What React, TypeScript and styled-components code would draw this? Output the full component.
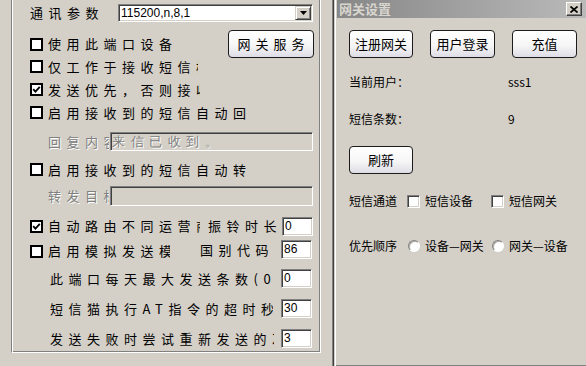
import React from "react";
import styled, { createGlobalStyle } from "styled-components";

const GlobalStyle = createGlobalStyle`
  html, body {
    margin: 0;
    padding: 0;
    background: #d4d0c8;
  }
  body {
    font-family: "Noto Sans CJK SC", "Liberation Sans", sans-serif;
  }
`;

const Screen = styled.div`
  display: flex;
  width: 586px;
  height: 366px;
  overflow: hidden;
  background: #d4d0c8;
  color: #000;
  font-family: "Noto Sans CJK SC", sans-serif;
`;

const LeftPane = styled.div`
  flex: 0 0 334px;
  box-shadow: inset -1px 0 #404040, inset -2px 0 #808080;
`;

const GroupBox = styled.div`
  box-sizing: border-box;
  width: 310px;
  height: 353px;
  margin-left: 11px;
  padding: 4px 6px 0 18px;
  border-left: 1px solid #808080;
  border-right: 1px solid #fff;
  border-bottom: 1px solid #fff;
  box-shadow: inset 1px 0 #fff, inset -1px 0 #808080, inset 0 -1px #808080;
  display: flex;
  flex-direction: column;
`;

const FormRow = styled.div<{ $mt: number; $h: number }>`
  display: flex;
  align-items: center;
  margin-top: ${(p) => p.$mt}px;
  height: ${(p) => p.$h}px;
`;

const Caption = styled.span<{
  $w?: number;
  $ml?: number;
  $dim?: boolean;
}>`
  display: block;
  flex: none;
  width: ${(p) => (p.$w ? `${p.$w}px` : "auto")};
  margin-left: ${(p) => p.$ml ?? 0}px;
  overflow: hidden;
  white-space: nowrap;
  font-size: 13px;
  line-height: 16px;
  letter-spacing: 5.5px;
  color: ${(p) => (p.$dim ? "#808080" : "#000")};
  text-shadow: ${(p) => (p.$dim ? "1px 1px 0 #fff" : "none")};
`;

const CheckLabel = styled.label<{ $low?: boolean }>`
  display: flex;
  align-items: center;
  gap: 5px;
  align-self: ${(p) => (p.$low ? "flex-end" : "center")};
`;

const BoldBox = styled.span`
  box-sizing: border-box;
  flex: none;
  width: 13px;
  height: 13px;
  border: 2px solid #000;
  background: #fff;
  display: flex;
  align-items: center;
  justify-content: center;
`;

const Field = styled.div<{ $w: number; $h?: number; $disabled?: boolean; $ml?: number }>`
  box-sizing: border-box;
  flex: none;
  width: ${(p) => p.$w}px;
  height: ${(p) => p.$h ?? 19}px;
  margin-left: ${(p) => p.$ml ?? 0}px;
  padding-left: 1px;
  display: flex;
  align-items: center;
  overflow: hidden;
  background: ${(p) => (p.$disabled ? "#d4d0c8" : "#fff")};
  border: 1px solid;
  border-color: #808080 #fff #fff #808080;
  box-shadow: inset 1px 1px #404040, inset -1px -1px #d4d0c8;
  font-family: "Liberation Sans", sans-serif;
  font-size: 12px;
  line-height: 15px;
  white-space: nowrap;
`;

const NumField = styled(Field)`
  margin: 0 2px 0 auto;
  padding-left: 2px;
`;

const Select = styled(Field)`
  padding-left: 2px;
`;

const DropButton = styled.span`
  box-sizing: border-box;
  margin-left: auto;
  margin-right: 1px;
  width: 16px;
  height: 14px;
  background: #d4d0c8;
  border: 1px solid;
  border-color: #d4d0c8 #404040 #404040 #d4d0c8;
  box-shadow: inset 1px 1px #fff, inset -1px -1px #808080;
  display: flex;
  align-items: center;
  justify-content: center;
`;

const PushButton = styled.button<{ $w: number; $spaced?: boolean; $push?: boolean }>`
  box-sizing: border-box;
  flex: none;
  width: ${(p) => p.$w}px;
  height: 28px;
  margin: 0;
  margin-left: ${(p) => (p.$push ? "auto" : "0")};
  padding: 0 0 0 ${(p) => (p.$spaced ? "5px" : "0")};
  border: 1px solid #1c1c1c;
  border-radius: 4px;
  background: linear-gradient(#ffffff, #f6f6f6 55%, #dedde6);
  font-family: "Noto Sans CJK SC", sans-serif;
  font-size: 13px;
  line-height: 16px;
  letter-spacing: ${(p) => (p.$spaced ? "5px" : "0")};
  color: #000;
`;

const Window = styled.div`
  flex: 1;
  display: flex;
  flex-direction: column;
  padding-left: 3px;
  box-shadow: inset 1px 0 #d4d0c8, inset 2px 0 #fff, inset 0 -1px #808080;
`;

const TitleBar = styled.div`
  display: flex;
  align-items: center;
  height: 18px;
  padding: 0 4px 0 2px;
  background: linear-gradient(to right, #878787, #bababa);
`;

const TitleText = styled.span`
  font-size: 13px;
  font-weight: bold;
  line-height: 16px;
  color: #d8d5ce;
`;

const CloseButton = styled.span`
  box-sizing: border-box;
  margin-left: auto;
  width: 16px;
  height: 14px;
  background: #d4d0c8;
  border: 1px solid;
  border-color: #fff #404040 #404040 #fff;
  box-shadow: inset -1px -1px #808080;
  display: flex;
  align-items: center;
  justify-content: center;
`;

const Body = styled.div`
  display: flex;
  flex-direction: column;
  padding-left: 12px;
`;

const ButtonRow = styled.div<{ $mt: number }>`
  display: flex;
  gap: 17px;
  margin-top: ${(p) => p.$mt}px;
`;

const Line = styled.div<{ $mt: number }>`
  display: grid;
  grid-template-columns: 58px 84px auto;
  align-items: center;
  height: 14px;
  margin-top: ${(p) => p.$mt}px;
`;

const InfoLine = styled(Line)`
  grid-template-columns: 159px auto;
`;

const Text = styled.span`
  font-size: 12px;
  line-height: 14px;
  white-space: nowrap;
`;

const Option = styled.label`
  display: flex;
  align-items: center;
  gap: 5px;
`;

const SunkenBox = styled.span`
  box-sizing: border-box;
  width: 13px;
  height: 13px;
  background: #fff;
  border: 1px solid;
  border-color: #808080 #fff #fff #808080;
  box-shadow: inset 1px 1px #404040, inset -1px -1px #d4d0c8;
`;

const Radio = styled.span`
  box-sizing: border-box;
  width: 12px;
  height: 12px;
  margin-left: 1px;
  border-radius: 50%;
  background: #fff;
  border: 1px solid;
  border-color: #808080 #fff #fff #808080;
  box-shadow: inset 1px 1px #b0aca4;
`;

const Check = ({ checked }: { checked?: boolean }) => (
  <BoldBox>
    {checked && (
      <svg width="9" height="9" viewBox="0 0 9 9">
        <polyline
          points="1.2,4.2 3.4,6.6 7.8,1.8"
          fill="none"
          stroke="#000"
          strokeWidth="1.8"
        />
      </svg>
    )}
  </BoldBox>
);

const App: React.FC = () => {
  return (
    <>
      <GlobalStyle />
      <Screen>
        <LeftPane>
          <GroupBox>
            <FormRow $mt={0} $h={18}>
              <Caption $w={88}>通讯参数</Caption>
              <Select $w={195} $h={18}>
                115200,n,8,1
                <DropButton>
                  <svg width="7" height="4" viewBox="0 0 7 4">
                    <polygon points="0,0 7,0 3.5,4" fill="#000" />
                  </svg>
                </DropButton>
              </Select>
            </FormRow>

            <FormRow $mt={8} $h={28}>
              <CheckLabel>
                <Check />
                <Caption>使用此端口设备</Caption>
              </CheckLabel>
              <PushButton $w={86} $spaced $push>
                网关服务
              </PushButton>
            </FormRow>

            <FormRow $mt={2} $h={13}>
              <CheckLabel>
                <Check />
                <Caption $w={150}>仅工作于接收短信模式</Caption>
              </CheckLabel>
            </FormRow>

            <FormRow $mt={10} $h={13}>
              <CheckLabel>
                <Check checked />
                <Caption $w={152}>发送优先，否则接收</Caption>
              </CheckLabel>
            </FormRow>

            <FormRow $mt={10} $h={13}>
              <CheckLabel>
                <Check />
                <Caption $w={200}>启用接收到的短信自动回复</Caption>
              </CheckLabel>
            </FormRow>

            <FormRow $mt={13} $h={19}>
              <Caption $w={61} $ml={18} $dim>
                回复内容
              </Caption>
              <Field $w={203} $ml={1} $disabled>
                <Caption $dim>来信已收到。</Caption>
              </Field>
            </FormRow>

            <FormRow $mt={12} $h={13}>
              <CheckLabel>
                <Check />
                <Caption $w={200}>启用接收到的短信自动转发</Caption>
              </CheckLabel>
            </FormRow>

            <FormRow $mt={10} $h={20}>
              <Caption $w={61} $ml={18} $dim>
                转发目标
              </Caption>
              <Field $w={203} $h={20} $ml={1} $disabled />
            </FormRow>

            <FormRow $mt={11} $h={18}>
              <CheckLabel>
                <Check checked />
                <Caption $w={152}>自动路由不同运营商</Caption>
              </CheckLabel>
              <Caption $ml={8}>振铃时长</Caption>
              <NumField $w={31}>0</NumField>
            </FormRow>

            <FormRow $mt={5} $h={19}>
              <CheckLabel $low>
                <Check />
                <Caption $w={122}>启用模拟发送模式</Caption>
              </CheckLabel>
              <Caption $ml={30}>国别代码</Caption>
              <NumField $w={31}>86</NumField>
            </FormRow>

            <FormRow $mt={10} $h={19}>
              <Caption $w={222} $ml={20}>
                此端口每天最大发送条数(0为不限)
              </Caption>
              <NumField $w={31}>0</NumField>
            </FormRow>

            <FormRow $mt={11} $h={19}>
              <Caption $w={223} $ml={20}>
                短信猫执行AT指令的超时秒数
              </Caption>
              <NumField $w={31}>30</NumField>
            </FormRow>

            <FormRow $mt={11} $h={19}>
              <Caption $w={224} $ml={20}>
                发送失败时尝试重新发送的次数
              </Caption>
              <NumField $w={31}>3</NumField>
            </FormRow>
          </GroupBox>
        </LeftPane>

        <Window>
          <TitleBar>
            <TitleText>网关设置</TitleText>
            <CloseButton>
              <svg width="8" height="7" viewBox="0 0 8 7">
                <path
                  d="M0.5 0.5 L7.5 6.5 M7.5 0.5 L0.5 6.5"
                  stroke="#000"
                  strokeWidth="1.7"
                />
              </svg>
            </CloseButton>
          </TitleBar>

          <Body>
            <ButtonRow $mt={12}>
              <PushButton $w={64}>注册网关</PushButton>
              <PushButton $w={65}>用户登录</PushButton>
              <PushButton $w={65}>充值</PushButton>
            </ButtonRow>

            <InfoLine $mt={17}>
              <Text>当前用户：</Text>
              <Text>sss1</Text>
            </InfoLine>

            <InfoLine $mt={23}>
              <Text>短信条数：</Text>
              <Text>9</Text>
            </InfoLine>

            <ButtonRow $mt={20}>
              <PushButton $w={64}>刷新</PushButton>
            </ButtonRow>

            <Line $mt={20}>
              <Text>短信通道</Text>
              <Option>
                <SunkenBox />
                <Text>短信设备</Text>
              </Option>
              <Option>
                <SunkenBox />
                <Text>短信网关</Text>
              </Option>
            </Line>

            <Line $mt={31}>
              <Text>优先顺序</Text>
              <Option>
                <Radio />
                <Text>设备—网关</Text>
              </Option>
              <Option>
                <Radio />
                <Text>网关—设备</Text>
              </Option>
            </Line>
          </Body>
        </Window>
      </Screen>
    </>
  );
};

export default App;
